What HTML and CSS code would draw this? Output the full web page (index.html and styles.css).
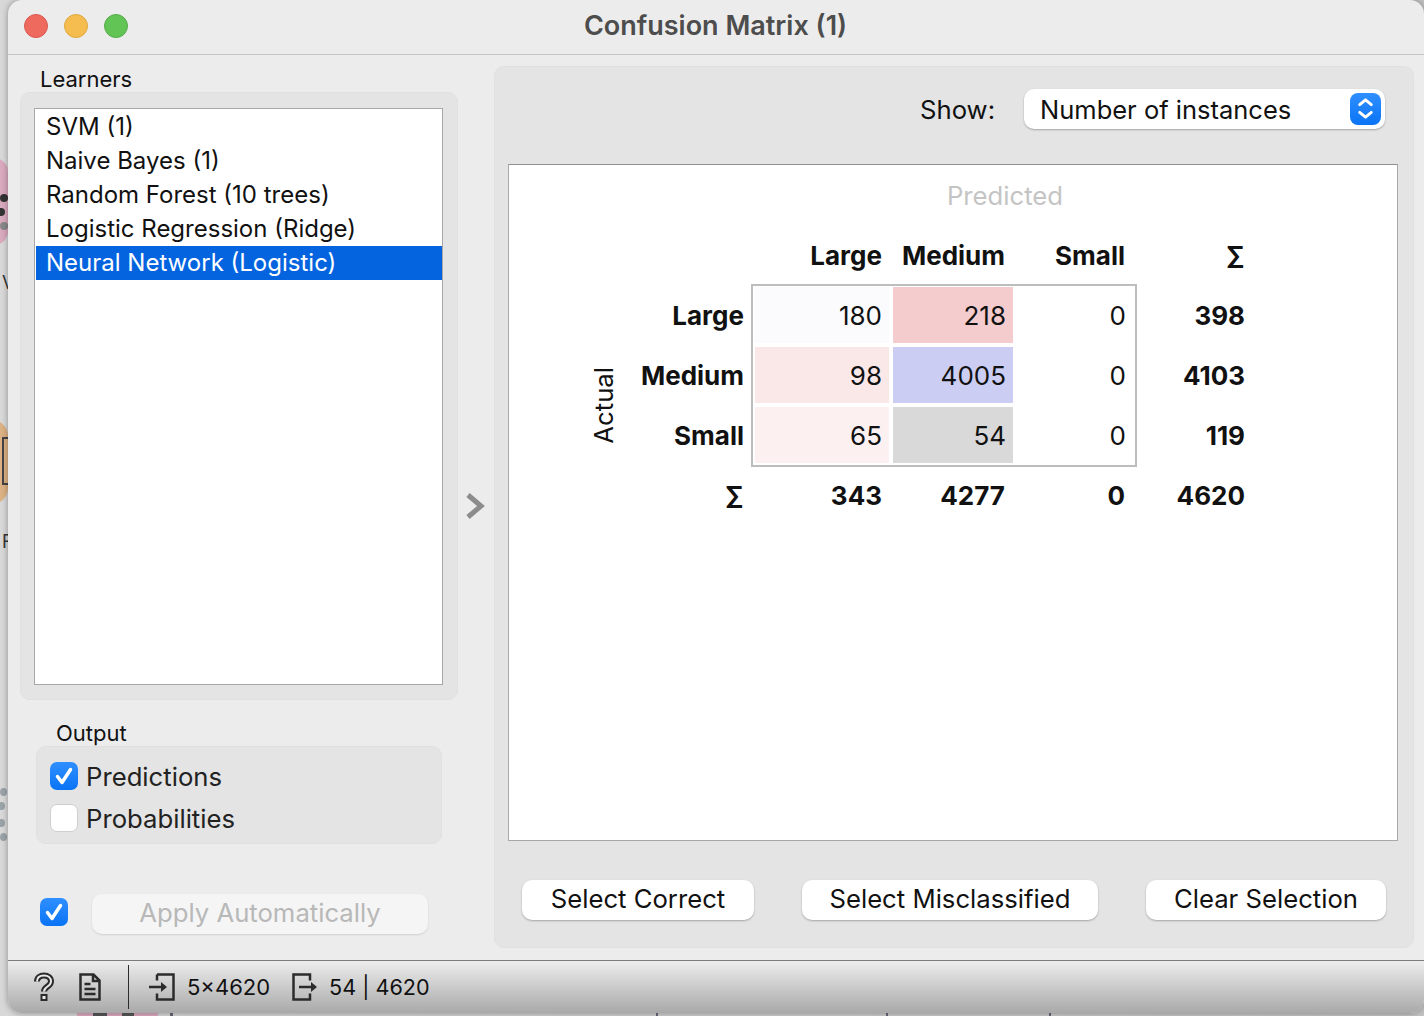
FILE: index.html
```html
<!DOCTYPE html>
<html lang="en">
<head>
    <meta charset="UTF-8">
    <meta name="viewport" content="width=device-width, initial-scale=1.0">
    <title>Confusion Matrix (1)</title>
    <link rel="stylesheet" href="styles.css">
</head>
<body>
    <!-- bits of the canvas behind the window -->
    <div class="desk desk-pink"><i></i><i></i><i></i></div>
    <div class="desk desk-orange"><i></i></div>
    <div class="desk desk-dots"><i></i><i></i><i></i><i></i></div>
    <span class="desk-text desk-v">V</span>
    <span class="desk-text desk-f">F</span>
    <div class="desk-bottom"></div>

    <div class="window">
        <header class="titlebar">
            <span class="light red"></span>
            <span class="light yellow"></span>
            <span class="light green"></span>
            <h1>Confusion Matrix (1)</h1>
        </header>

        <div class="main">
            <aside class="controls">
                <div class="box-label">Learners</div>
                <div class="learners-box">
                    <ul class="learners">
                        <li>SVM (1)</li>
                        <li>Naive Bayes (1)</li>
                        <li>Random Forest (10 trees)</li>
                        <li>Logistic Regression (Ridge)</li>
                        <li class="selected">Neural Network (Logistic)</li>
                    </ul>
                </div>

                <div class="box-label output-label">Output</div>
                <div class="output-box">
                    <div class="check-row">
                        <span class="check on"><svg viewBox="0 0 28 28"><path d="M7.5 14.5l4.5 6 8.5-13"/></svg></span>
                        <span>Predictions</span>
                    </div>
                    <div class="check-row">
                        <span class="check"></span>
                        <span>Probabilities</span>
                    </div>
                </div>

                <div class="apply-row">
                    <span class="check on"><svg viewBox="0 0 28 28"><path d="M7.5 14.5l4.5 6 8.5-13"/></svg></span>
                    <button class="btn apply" disabled>Apply Automatically</button>
                </div>
            </aside>

            <div class="splitter">
                <svg viewBox="0 0 20 28" width="20" height="28"><path d="M3 3l13 11-13 11"/></svg>
            </div>

            <section class="panel">
                <div class="show-row">
                    <span class="show-label">Show:</span>
                    <div class="combo">
                        <span>Number of instances</span>
                        <span class="combo-arrows">
                            <svg viewBox="0 0 32 32"><path d="M10 12l6-5 6 5M10 20l6 5 6-5"/></svg>
                        </span>
                    </div>
                </div>

                <div class="plot">
                    <div class="matrix">
                        <div class="predicted">Predicted</div>
                        <div class="actual"><span>Actual</span></div>
                        <div class="matrix-frame"></div>

                        <div class="head row-0 col-1">Large</div>
                        <div class="head row-0 col-2">Medium</div>
                        <div class="head row-0 col-3">Small</div>
                        <div class="head row-0 col-sum">∑</div>

                        <div class="head row-1 row-head">Large</div>
                        <div class="cell row-1 col-1" style="background: #fbfbfe">180</div>
                        <div class="cell row-1 col-2" style="background: #f4cccd">218</div>
                        <div class="cell row-1 col-3">0</div>
                        <div class="head row-1 col-sum">398</div>

                        <div class="head row-2 row-head">Medium</div>
                        <div class="cell row-2 col-1" style="background: #fae7e8">98</div>
                        <div class="cell row-2 col-2" style="background: #cccdf3">4005</div>
                        <div class="cell row-2 col-3">0</div>
                        <div class="head row-2 col-sum">4103</div>

                        <div class="head row-3 row-head">Small</div>
                        <div class="cell row-3 col-1" style="background: #fcf0f1">65</div>
                        <div class="cell row-3 col-2" style="background: #d9d9d9">54</div>
                        <div class="cell row-3 col-3">0</div>
                        <div class="head row-3 col-sum">119</div>

                        <div class="head row-4 row-head">∑</div>
                        <div class="head row-4 col-1">343</div>
                        <div class="head row-4 col-2">4277</div>
                        <div class="head row-4 col-3">0</div>
                        <div class="head row-4 col-sum">4620</div>
                    </div>
                </div>

                <div class="actions">
                    <button class="btn select-correct">Select Correct</button>
                    <button class="btn select-mis">Select Misclassified</button>
                    <button class="btn clear">Clear Selection</button>
                </div>
            </section>
        </div>

        <footer class="statusbar">
            <svg class="icon-help" viewBox="0 0 22 30" width="22" height="30">
                <path class="outer" d="M4 9.5C4 5.5 7 3.5 11 3.5s7 2.2 7 6c0 5-7 5-7 10"/>
                <path class="inner" d="M4 9.5C4 5.5 7 3.5 11 3.5s7 2.2 7 6c0 5-7 5-7 10"/>
                <rect x="8.5" y="23" width="5" height="5" fill="#eee" stroke="#2b2b2b" stroke-width="2"/>
            </svg>
            <svg class="icon-doc" viewBox="0 0 22 28" width="22" height="28">
                <path d="M1.5 1.5h13l6 6v19h-19zM14 1.5v6.5h6.500"/>
                <path d="M5.500 11h6M5.500 16h11M5.500 21h11"/>
            </svg>
            <span class="divider"></span>
            <svg class="icon-io" viewBox="0 0 26 28" width="26" height="28">
                <path d="M8 1.500h16.500v25H8v-6M8 1.500v6M0 14h14"/>
                <path class="arrow" d="M12 9l6 5-6 5z"/>
            </svg>
            <span class="count in-count">5×4620</span>
            <svg class="icon-io" viewBox="0 0 26 28" width="26" height="28">
                <path d="M18 7.500v-6H1.500v25H18v-6M7 14h13"/>
                <path class="arrow" d="M19 9l6 5-6 5z"/>
            </svg>
            <span class="count out-count">54 | 4620</span>
        </footer>
    </div>
</body>
</html>
```

FILE: styles.css
```css
* {
    box-sizing: border-box;
}

html, body {
    height: 100%;
}

body {
    margin: 0;
    overflow: hidden;
    display: flex;
    align-items: flex-start;
    padding-left: 8px;
    background: linear-gradient(90deg, #d8d8d8, #c2c2c2);
    font-family: Inter, "Noto Sans", sans-serif;
    font-size: 25.7px;
    color: #111;
}

.desk {
    position: absolute;
    left: -40px;
    width: 48px;
}

.desk i {
    position: absolute;
    border-radius: 50%;
}

.desk-pink {
    top: 158px;
    height: 87px;
    border-radius: 14px;
    background: #d9a9bd;
}

.desk-pink i {
    right: 0;
    width: 8px;
    height: 8px;
    background: #333;
}

.desk-pink i:nth-child(1) { top: 36px; }
.desk-pink i:nth-child(2) { top: 50px; right: 3px; }
.desk-pink i:nth-child(3) { top: 64px; background: #888; }

.desk-orange {
    top: 420px;
    height: 84px;
    border-radius: 16px;
    background: #dcb183;
}

.desk-orange i {
    top: 17px;
    right: -2px;
    width: 8px;
    height: 48px;
    border-radius: 0;
    border: 2px solid #444;
}

.desk-dots {
    top: 785px;
    height: 50px;
}

.desk-dots i {
    width: 7px;
    height: 8px;
    background: #9aa3a8;
}

.desk-dots i:nth-child(1) { top: 3px; right: 1px; }
.desk-dots i:nth-child(2) { top: 17px; right: 3px; }
.desk-dots i:nth-child(3) { top: 34px; right: 3px; }
.desk-dots i:nth-child(4) { top: 48px; right: 1px; }

.desk-text {
    position: absolute;
    left: 2px;
    font-size: 18px;
    color: #333;
}

.desk-v { top: 272px; }
.desk-f { top: 531px; }

.desk-bottom {
    position: absolute;
    left: 0;
    right: 0;
    bottom: 0;
    height: 4px;
    background:
        linear-gradient(90deg,
            transparent 77px, #d9a9bd 77px, #d9a9bd 93px, #555 93px, #555 107px,
            #d9a9bd 107px, #d9a9bd 122px, #555 122px, #555 134px, #d9a9bd 134px,
            #d9a9bd 158px, transparent 158px, transparent 170px, #667 170px,
            #667 173px, transparent 173px, transparent 656px, #667 656px,
            #667 658px, transparent 658px, transparent 886px, #667 886px,
            #667 888px, transparent 888px, transparent 1049px, #667 1049px,
            #667 1051px, transparent 1051px);
}

.window {
    flex: 1;
    height: 1013px;
    position: relative;
    display: flex;
    flex-direction: column;
    background: #ececec;
    border-radius: 14px;
    overflow: hidden;
    box-shadow: 0 0 6px rgba(0, 0, 0, 0.35);
}

.titlebar {
    height: 55px;
    flex: none;
    display: flex;
    align-items: center;
    gap: 16px;
    padding: 0 0 3px 16px;
    border-bottom: 1px solid #c4c4c4;
    position: relative;
}

.titlebar h1 {
    position: absolute;
    left: 0;
    right: 0;
    top: 10px;
    margin: 0;
    padding-right: 1px;
    text-align: center;
    font-size: 27px;
    line-height: 31px;
    font-weight: 600;
    color: #4d4d4d;
}

.light {
    width: 24px;
    height: 24px;
    border-radius: 50%;
}

.red { background: #ee6a5f; border: 1px solid #d9584f; }
.yellow { background: #f5bd4f; border: 1px solid #dea73f; }
.green { background: #61c454; border: 1px solid #55ad49; }

.main {
    flex: 1;
    display: flex;
    min-height: 0;
}

.controls {
    width: 450px;
    flex: none;
    padding: 12px 0 0 12px;
}

.box-label {
    padding-left: 20px;
    font-size: 22px;
    line-height: 24px;
}

.learners-box {
    width: 438px;
    height: 608px;
    margin-top: 1px;
    padding: 15px 14px 14px 13px;
    background: #e4e4e4;
    border: 1px solid #e0e0e0;
    border-radius: 10px;
}

.learners {
    list-style: none;
    margin: 0;
    padding: 1px 0 1px 1px;
    height: 577px;
    background: #fff;
    border: 1px solid #a8a8a8;
    font-size: 24px;
}

.learners li {
    height: 34px;
    line-height: 34px;
    padding-left: 10px;
}

.learners li.selected {
    background: #0464df;
    color: #fff;
}

.output-label {
    margin: 21px 0 0 16px;
}

.output-box {
    width: 406px;
    height: 98px;
    margin: 1px 0 0 16px;
    padding: 15px 13px;
    display: flex;
    flex-direction: column;
    gap: 14px;
    background: #e4e4e4;
    border: 1px solid #e0e0e0;
    border-radius: 10px;
}

.check-row {
    display: flex;
    align-items: center;
    gap: 8px;
    height: 28px;
    color: #222;
}

.check {
    width: 28px;
    height: 28px;
    flex: none;
    border-radius: 7px;
    background: #fff;
    border: 1px solid #cfcfcf;
}

.check.on {
    background: linear-gradient(#2f8fff, #0a74f5);
    border: 0;
}

.check svg {
    display: block;
    fill: none;
    stroke: #fff;
    stroke-width: 3.500;
    stroke-linecap: round;
    stroke-linejoin: round;
}

.apply-row {
    display: flex;
    align-items: center;
    gap: 24px;
    margin: 50px 0 0 20px;
}

.apply-row .check {
    margin-top: -4px;
}

.btn {
    height: 40px;
    padding: 0 0 3px;
    border: 0;
    border-radius: 10px;
    background: #fff;
    box-shadow: 0 1px 2px rgba(0, 0, 0, 0.28);
    font-family: inherit;
    font-size: 25.7px;
    color: #111;
}

.apply {
    width: 336px;
    background: #f5f5f5;
    color: #b8b8b8;
    box-shadow: 0 1px 2px rgba(0, 0, 0, 0.12);
}

.splitter {
    width: 36px;
    flex: none;
    padding: 437px 0 0 7px;
}

.splitter svg {
    display: block;
    fill: none;
    stroke: #8c8c8c;
    stroke-width: 5;
}

.panel {
    width: 920px;
    height: 882px;
    flex: none;
    margin-top: 11px;
    padding: 0 15px 0 13px;
    background: #e4e4e4;
    border: 1px solid #e0e0e0;
    border-radius: 10px;
}

.show-row {
    height: 97px;
    display: flex;
    align-items: flex-start;
    padding: 22px 0 0 412px;
}

.show-label {
    width: 104px;
    line-height: 42px;
}

.combo {
    width: 361px;
    height: 40px;
    display: flex;
    align-items: center;
    justify-content: space-between;
    padding: 0 4px 0 16px;
    background: #fff;
    border-radius: 10px;
    box-shadow: 0 1px 2px rgba(0, 0, 0, 0.28);
    font-size: 25.5px;
}

.combo-arrows {
    width: 31px;
    height: 32px;
    border-radius: 8px;
    background: linear-gradient(#2f8fff, #0a74f5);
}

.combo-arrows svg {
    display: block;
    fill: none;
    stroke: #fff;
    stroke-width: 3;
    stroke-linecap: round;
    stroke-linejoin: round;
}

.plot {
    height: 677px;
    background: #fff;
    border: 1px solid #a8a8a8;
    border-top-color: #8f8f8f;
}

.matrix {
    display: grid;
    grid-template-columns: 30px 135px 138px 124px 120px 122px;
    grid-template-rows: repeat(6, 60px);
    margin-left: 79px;
    width: 669px;
}

.predicted {
    grid-column: 3 / -1;
    grid-row: 1;
    align-self: center;
    text-align: center;
    color: #c4c4c4;
}

.actual {
    grid-column: 1;
    grid-row: 3 / 7;
    display: flex;
    align-items: center;
    justify-content: center;
}

.actual span {
    writing-mode: vertical-rl;
    transform: rotate(180deg);
}

.matrix-frame {
    grid-column: 3 / 6;
    grid-row: 3 / 6;
    margin: -1px -2px -2px -2px;
    border: 2px solid #bdbdbd;
}

.head, .cell {
    display: flex;
    align-items: center;
    justify-content: flex-end;
    padding-right: 10px;
    font-size: 26px;
}

.head {
    font-weight: 700;
}

.row-0 { grid-row: 2; }
.row-1 { grid-row: 3; }
.row-2 { grid-row: 4; }
.row-3 { grid-row: 5; }
.row-4 { grid-row: 6; }

.col-1 { grid-column: 3; padding-right: 9px; }
.col-2 { grid-column: 4; }
.col-3 { grid-column: 5; }

.col-sum {
    grid-column: 6;
    padding-right: 12px;
}

.row-head {
    grid-column: 2;
    padding-right: 9px;
}

.cell {
    margin: 2px;
    padding-right: 7px;
}

.actions {
    display: flex;
    padding: 39px 0 0 14px;
}

.select-correct { width: 232px; }
.select-mis { width: 296px; margin-left: 48px; }
.clear { width: 240px; margin-left: 48px; }

.statusbar {
    height: 53px;
    flex: none;
    display: flex;
    align-items: center;
    padding: 0 0 0 25px;
    border-top: 1px solid #7c7c7c;
    background: linear-gradient(#ededed, #a9a9a9);
}

.statusbar svg {
    flex: none;
    fill: none;
    stroke: #2b2b2b;
    stroke-width: 2.500;
}

.icon-help .outer {
    stroke: #2b2b2b;
    stroke-width: 6;
}

.icon-help .inner {
    stroke: #e8e8e8;
    stroke-width: 2;
}

.icon-doc {
    margin-left: 24px;
}

.divider {
    width: 1px;
    height: 44px;
    margin: 0 20px 0 27px;
    background: #2b2b2b;
}

.icon-io .arrow {
    fill: #2b2b2b;
    stroke: none;
}

.count {
    margin-left: 12px;
    font-size: 22px;
}

.in-count {
    margin-right: 22px;
}

.out-count {
    margin-left: 11px;
    font-size: 21.6px;
}
```
